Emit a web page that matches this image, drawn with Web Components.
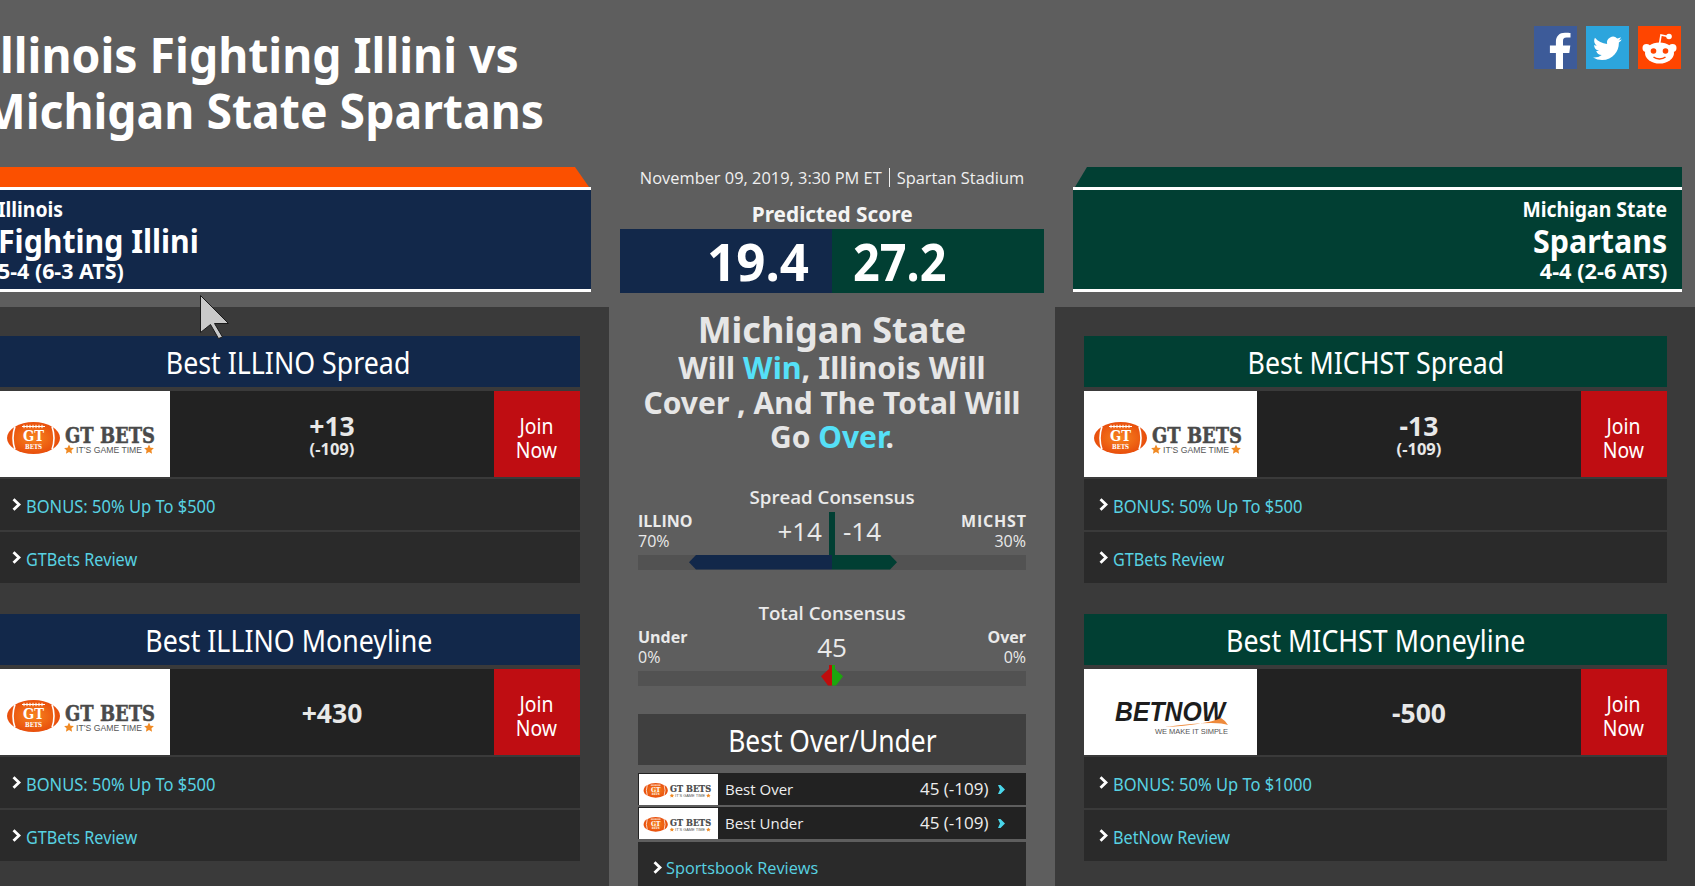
<!DOCTYPE html>
<html lang="en"><head><meta charset="utf-8"><title>Illinois vs Michigan State</title>
<style>
html,body{margin:0;padding:0;height:886px;overflow:hidden;background:#5e5e5e}
body{font-family:"Noto Sans","Open Sans",sans-serif;color:#fff}
</style></head><body>
<x-page>
  <x-title slot="title">Illinois Fighting Illini vs<br>Michigan State Spartans</x-title>
  <x-social slot="social"></x-social>

  <x-team slot="lteam" side="left" accent="#fb5000" bg="#12284a"><span>Illinois</span><span slot="name">Fighting Illini</span><span slot="rec">5-4 (6-3 ATS)</span></x-team>
  <x-team slot="rteam" side="right" accent="#013f33" bg="#013f33"><span>Michigan State</span><span slot="name">Spartans</span><span slot="rec">4-4 (2-6 ATS)</span></x-team>

  <x-panel slot="lpanel">
    <x-card color="#12284a"><span slot="title">Best ILLINO Spread</span><x-gt slot="logo"></x-gt><span slot="odds">+13</span><span slot="juice">(-109)</span><span slot="bonus">BONUS: 50% Up To $500</span><span slot="review">GTBets Review</span></x-card>
    <x-card color="#12284a"><span slot="title">Best ILLINO Moneyline</span><x-gt slot="logo"></x-gt><span slot="odds">+430</span><span slot="bonus">BONUS: 50% Up To $500</span><span slot="review">GTBets Review</span></x-card>
  </x-panel>

  <x-center slot="center">
    <x-score></x-score>
    <x-verdict></x-verdict>
    <x-consensus kind="spread"></x-consensus>
    <x-consensus kind="total"></x-consensus>
    <x-ou></x-ou>
  </x-center>

  <x-panel slot="rpanel" class="r">
    <x-card color="#013f33"><span slot="title">Best MICHST Spread</span><x-gt slot="logo"></x-gt><span slot="odds">-13</span><span slot="juice">(-109)</span><span slot="bonus">BONUS: 50% Up To $500</span><span slot="review">GTBets Review</span></x-card>
    <x-card color="#013f33"><span slot="title">Best MICHST Moneyline</span><x-betnow slot="logo"></x-betnow><span slot="odds">-500</span><span slot="bonus">BONUS: 50% Up To $1000</span><span slot="review">BetNow Review</span></x-card>
  </x-panel>
</x-page>
<x-cursor></x-cursor>

<script>
const CHEV='<svg width="9" height="13" viewBox="0 0 9 13"><path d="M1.5 1.2 L7 6.5 L1.5 11.8" fill="none" stroke="#fff" stroke-width="2.8"/></svg>';
function def(name,render){
  customElements.define(name,class extends HTMLElement{
    connectedCallback(){ if(this.shadowRoot) return; this.attachShadow({mode:'open'}).innerHTML=render(this); }
  });
}
def('x-page',()=>`<style>
:host{display:grid;grid-template-columns:641px 446px 641px;grid-template-rows:167px 140px 1fr;width:1728px;height:886px;margin-left:-32px;overflow:hidden}
.top{grid-column:1/4;grid-row:1;display:flex;justify-content:space-between;align-items:flex-start;padding:0 15px 0 14px}
.lt{grid-column:1;grid-row:2;padding:0 18px 15px 14px}
.rt{grid-column:3;grid-row:2;padding:0 14px 15px 18px}
.lp{grid-column:1;grid-row:3}.rp{grid-column:3;grid-row:3}
.c{grid-column:2;grid-row:2/4}
</style>
<div class="top"><slot name="title"></slot><slot name="social"></slot></div>
<div class="lt"><slot name="lteam"></slot></div>
<div class="c"><slot name="center"></slot></div>
<div class="rt"><slot name="rteam"></slot></div>
<div class="lp"><slot name="lpanel"></slot></div>
<div class="rp"><slot name="rpanel"></slot></div>`);
def('x-title',()=>`<style>
:host{display:block;padding-top:26px;font:700 49px/56px "Noto Sans",sans-serif;color:#fff;white-space:nowrap}
.t{display:inline-block;transform:scaleX(.945);transform-origin:0 0}
</style><div class="t"><slot></slot></div>`);
def('x-social',()=>`<style>
:host{display:flex;gap:9px;padding-top:26px}
svg{display:block;width:43px;height:43px}
</style>
<svg viewBox="0 0 43 43"><rect width="43" height="43" fill="#3d5b99"/><path d="M29 43V27h6.3l1-7.6H29v-4.2c0-2.2.7-3.6 3.6-3.6h3.9V7c-1-.1-3-.3-5.6-.3-5.500 0-9 3.300-9 9.100v3.600h-6V27h6v16z" fill="#fff"/></svg>
<svg viewBox="0 0 43 43"><rect width="43" height="43" fill="#2ca5dd"/><g transform="translate(7 8) scale(1.2)"><path fill="#fff" d="M23.953 4.57a10 10 0 01-2.825.775 4.958 4.958 0 002.163-2.723c-.951.555-2.005.959-3.127 1.184a4.92 4.92 0 00-8.384 4.482C7.69 8.095 4.067 6.13 1.64 3.162a4.822 4.822 0 00-.666 2.475c0 1.71.87 3.213 2.188 4.096a4.904 4.904 0 01-2.228-.616v.06a4.923 4.923 0 003.946 4.827 4.996 4.996 0 01-2.212.085 4.936 4.936 0 004.604 3.417 9.867 9.867 0 01-6.102 2.105c-.39 0-.779-.023-1.17-.067a13.995 13.995 0 007.557 2.209c9.053 0 13.998-7.496 13.998-13.985 0-.21 0-.42-.015-.63A9.935 9.935 0 0024 4.59z"/></g></svg>
<svg viewBox="0 0 43 43"><rect width="43" height="43" fill="#ff4500"/>
<path d="M21.500 18 L23 9 L30 10.500" fill="none" stroke="#fff" stroke-width="1.600"/><circle cx="31" cy="10.500" r="2.800" fill="#fff"/>
<circle cx="8.500" cy="22" r="4" fill="#fff"/><circle cx="34.500" cy="22" r="4" fill="#fff"/>
<ellipse cx="21.500" cy="27" rx="14.500" ry="10.500" fill="#fff"/>
<circle cx="15.500" cy="25" r="2.800" fill="#ff4500"/><circle cx="27.500" cy="25" r="2.800" fill="#ff4500"/>
<path d="M15.500 31c3 2.500 9 2.500 12 0" fill="none" stroke="#ff4500" stroke-width="1.500"/></svg>`);
def('x-team',h=>{const r=h.getAttribute('side')==='right';return `<style>
:host{display:block;height:125px;color:#fff}
.cap{height:20px;background:${h.getAttribute('accent')};clip-path:${r?'polygon(14px 0,100% 0,100% 100%,2px 100%)':'polygon(0 0,calc(100% - 16px) 0,calc(100% - 2px) 100%,0 100%)'}}
.box{box-sizing:border-box;border-top:3px solid #fff;border-bottom:3px solid #fff;height:105px;background:${h.getAttribute('bg')};
 padding:0 15px 0 16px;text-align:${r?'right':'left'};display:flex;flex-direction:column}
.a{font:700 20.500px/24px "Noto Sans",sans-serif;padding-top:7px}
.b{font:700 32px/39px "Noto Sans",sans-serif;}
.c{font:700 21.500px/22px "Noto Sans",sans-serif;}
.s{display:inline-block;transform:scaleX(.945);transform-origin:${r?'100% 0':'0 0'}}
.b .s{transform:scaleX(${r?.95:.945})}.c .s{transform:scaleX(${r?1.01:.995})}
</style><div class="cap"></div><div class="box">
<div class="a"><span class="s"><slot></slot></span></div><div class="b"><span class="s"><slot name="name"></slot></span></div><div class="c"><span class="s"><slot name="rec"></slot></span></div></div>`});
def('x-panel',()=>`<style>
:host{display:flex;flex-direction:column;gap:31px;height:100%;box-sizing:border-box;background:#3a3a3a;padding:29px 29px 0 29px}
</style><slot></slot>`);
def('x-card',h=>`<style>
:host{display:block;width:583px;color:#fff}
.h{height:51px;background:${h.getAttribute('color')};display:flex;justify-content:center;margin-bottom:4px}
.h span{display:inline-block;font:400 30px/53px "Noto Sans",sans-serif;transform:scaleX(.892);white-space:nowrap}
.row{display:flex;height:86px;background:#222;margin-bottom:2px}
.logo{width:173px;background:#fff;flex:none}
.odds{flex:1;display:flex;flex-direction:column;align-items:center;justify-content:center;color:#e8e8e8;font-family:"Noto Sans",sans-serif;font-weight:700;padding-top:3px}
.o{font-size:26.500px;line-height:26px}.j{font-size:16.500px;line-height:18px;padding-top:1px}
.j:empty{padding:0}
.join{width:86px;flex:none;background:#bf0d12;display:flex;align-items:center;justify-content:center;text-align:center;padding:5px 2px 0 0;box-sizing:border-box}
.join span{display:inline-block;font:400 22px/24px "Noto Sans",sans-serif;transform:scaleX(.88)}
.l{display:flex;align-items:center;height:51px;background:#2a2a2a;padding:2px 0 0 15px;box-sizing:border-box;margin-bottom:2px;color:#58d2e2}
.l svg{flex:none;margin:-3px 5px 0 0}
.l b{font:400 18px/1 "Noto Sans",sans-serif;display:inline-block;transform:scaleX(.917);transform-origin:0 50%;white-space:nowrap}
.l:last-child{margin:0}
.l:last-child b{transform:scaleX(.9)}
</style>
<div class="h"><span><slot name="title"></slot></span></div>
<div class="row"><div class="logo"><slot name="logo"></slot></div>
<div class="odds"><div class="o"><slot name="odds"></slot></div><div class="j"><slot name="juice"></slot></div></div>
<div class="join"><span>Join<br>Now</span></div></div>
<div class="l">${CHEV}<b><slot name="bonus"></slot></b></div>
<div class="l">${CHEV}<b><slot name="review"></slot></b></div>`);
const GT=(w,h,vb)=>`<svg width="${w}" height="${h}" viewBox="${vb}" style="display:block" font-family="'DejaVu Serif','Liberation Serif',serif">
<defs><radialGradient id="fb"><stop offset="0" stop-color="#f7841f"/><stop offset="1" stop-color="#e84e0c"/></radialGradient></defs>
<ellipse cx="36.500" cy="47" rx="26.500" ry="16" fill="url(#fb)"/>
<path d="M18 35.500q-4 11.500 0 23M55 35.500q4 11.500 0 23" fill="none" stroke="#fff" stroke-width="1.600"/>
<path d="M25 35.500h23M27 33.800v3.400M30 33.800v3.400M33 33.800v3.400M36 33.800v3.400M39 33.800v3.400M42 33.800v3.400M45 33.800v3.400" stroke="#fff" stroke-width="1" fill="none"/>
<text x="36.500" y="50" text-anchor="middle" font-size="15" font-weight="700" fill="#fff" textLength="21" lengthAdjust="spacingAndGlyphs">GT</text>
<text x="36.500" y="58" text-anchor="middle" font-size="7" font-weight="700" fill="#fff" textLength="17" lengthAdjust="spacingAndGlyphs">BETS</text>
<text x="68" y="51.500" font-size="22" font-weight="700" fill="#4a4a4a" stroke="#4a4a4a" stroke-width=".5" textLength="90" lengthAdjust="spacingAndGlyphs">GT BETS</text>
<text x="79" y="61.500" font-size="8.500" font-family="'Liberation Sans',sans-serif" fill="#555" textLength="66" lengthAdjust="spacingAndGlyphs">IT’S GAME TIME</text>
<path d="M72 53.500l1.500 3.200 3.400.4-2.500 2.300.7 3.400-3.100-1.700-3.100 1.700.7-3.400-2.500-2.300 3.400-.4zM152 53.500l1.500 3.200 3.400.4-2.500 2.300.7 3.400-3.100-1.700-3.100 1.700.7-3.400-2.500-2.300 3.400-.4z" fill="#f08a24"/>
</svg>`;
def('x-gt',h=>`<style>:host{display:block}</style>`+(h.hasAttribute('small')?GT(79,31,'0 11 173 68'):GT(173,86,'0 0 173 86')));
def('x-betnow',()=>`<style>:host{display:block}</style><svg width="173" height="86" viewBox="0 0 173 86" style="display:block">
<text x="31" y="52" font-family="'Liberation Sans',sans-serif" font-size="27" font-weight="700" font-style="italic" fill="#1d1d1d" textLength="110" lengthAdjust="spacingAndGlyphs">BETNOW</text>
<path d="M81 58q40-2 56-9q5 3 7 7q-12-5-63 2z" fill="#ee8a3c"/>
<text x="71" y="65" font-family="'Liberation Sans',sans-serif" font-size="7.500" fill="#555" textLength="73" lengthAdjust="spacing">WE MAKE IT SIMPLE</text></svg>`);
def('x-center',()=>`<style>:host{display:block;height:100%}</style><slot></slot>`);
def('x-score',()=>`<style>
:host{display:block;padding:0 11px;font-family:"Open Sans","Noto Sans",sans-serif;text-align:center}
.d{font-size:16.400px;color:#f0f0f0;display:flex;justify-content:center;height:21px;align-items:center;white-space:nowrap}
.d i{display:block;width:1px;height:19px;background:#f0f0f0;margin:0 7px}
.p{font:700 21px/26px "Noto Sans",sans-serif;height:41px;padding-top:13px;box-sizing:border-box;color:#f4f4f4}
.p span{display:inline-block;transform:scaleX(.99)}
.s{display:grid;grid-template-columns:1fr 1fr;height:63px;font:700 52px/64px "Noto Sans",sans-serif;color:#fff}
.s div:first-child{background:#12284a;text-align:right;padding-right:23px}
.s div:last-child{background:#013f33;text-align:left;padding-left:21px}
.s span{display:inline-block;transform:scaleX(.98);transform-origin:100% 0}
.s div:last-child span{transform:scaleX(.9);transform-origin:0 0}
</style><div class="d"><span>November 09, 2019, 3:30 PM ET</span><i></i><span>Spartan Stadium</span></div>
<div class="p"><span>Predicted Score</span></div>
<div class="s"><div><span>19.4</span></div><div><span>27.2</span></div></div>`);
def('x-verdict',()=>`<style>
:host{display:block;text-align:center;color:#e6e6e6;padding-top:17px;font-weight:700;font-family:"Noto Sans",sans-serif;height:176px;box-sizing:content-box}
.a{font-size:36px;line-height:42px}.b{font-size:30px;line-height:34.500px}
em{font-style:normal;color:#55e0f8}
.s{display:inline-block;white-space:nowrap}
.w{transform:scaleX(1.018)}
</style><div class="a"><span class="s">Michigan State</span></div>
<div class="b"><span class="s w">Will <em>Win</em>, Illinois Will</span></div>
<div class="b"><span class="s">Cover , And The Total Will</span></div>
<div class="b"><span class="s">Go <em>Over</em>.</span></div>`);
def('x-consensus',h=>{const sp=h.getAttribute('kind')==='spread';return `<style>
:host{display:block;margin:0 29px;font-family:"Open Sans","Noto Sans",sans-serif;color:#eaeaea;height:${sp?116:113}px;position:relative}
.h{text-align:center;font-size:18.700px;line-height:24px;font-weight:600}
.g{display:grid;grid-template-columns:1fr auto 1fr;height:44px;padding-top:2px}
.sd{font-size:16px;line-height:20px}
.sd b{display:block;font-size:16px;font-weight:700}
.sd b.w{letter-spacing:.8px;margin-right:-.8px}
.sd:last-child{text-align:right}
.m{font-size:26px;line-height:34px;display:flex;justify-content:center;padding-top:3px;width:130px;box-sizing:border-box}
.m span{display:block;width:65px;box-sizing:border-box}
.m .c{text-align:center;width:130px}
.m .l{text-align:right;padding-right:10px}.m .r{padding-left:11px}
.t{position:relative;height:14.500px;background:#525252}
.pin{position:absolute;left:191px;top:-43px;width:6px;height:43px;background:#013f33}
.n{position:absolute;left:51px;width:143px;top:0;bottom:0;background:#12284a;clip-path:polygon(7px 0,100% 0,100% 100%,7px 100%,0 50%)}
.v{position:absolute;left:194px;width:65px;top:0;bottom:0;background:#013f33;clip-path:polygon(0 0,calc(100% - 7px) 0,100% 50%,calc(100% - 7px) 100%,0 100%)}
.dl,.dr{position:absolute;top:-6px;bottom:0;width:11px}
.dl{left:183px;background:#bf0c0c;clip-path:polygon(8px 0,100% 0,100% 100%,7px 100%,0 55%,8px 20%)}
.dr{left:194px;background:#1da60e;clip-path:polygon(0 0,3px 0,3px 20%,100% 55%,4px 100%,0 100%)}
</style>
<div class="h">${sp?'Spread Consensus':'Total Consensus'}</div>
<div class="g"><div class="sd"><b>${sp?'ILLINO':'Under'}</b>${sp?'70%':'0%'}</div>
${sp?'<div class="m"><span class="l">+14</span><span class="r">-14</span></div>':'<div class="m"><span class="c">45</span></div>'}
<div class="sd"><b class="${sp?'w':''}">${sp?'MICHST':'Over'}</b>${sp?'30%':'0%'}</div></div>
<div class="t">${sp?'<i class="n"></i><i class="v"></i><i class="pin"></i>':'<i class="dl"></i><i class="dr"></i>'}</div>`});
def('x-ou',()=>`<style>
:host{display:block;margin:0 29px;color:#fff}
.h{height:51px;background:#3f3f3f;text-align:center;margin-bottom:8px}
.h span{display:inline-block;font:400 30px/54px "Noto Sans",sans-serif;transform:scaleX(.88)}
.r{display:flex;height:32px;align-items:center;background:#222;margin-bottom:2px;font:400 15px/34px "Open Sans",sans-serif;color:#eee}
.lg{width:79px;height:31px;margin-left:1px;background:#fff;flex:none}
.n{flex:1;padding-left:7px}.v{width:68px;white-space:nowrap;font-size:17px}
.a{margin:0 21px 0 10px;width:7px;height:9px;display:block}
.rv{margin-top:3px;height:70px;background:#2a2a2a;display:flex;align-items:flex-start;padding:14px 0 0 15px;box-sizing:border-box;color:#58d2e2;font:400 16.300px/24px "Open Sans",sans-serif}
.rv svg{margin:5px 4px 0 0}
</style>
<div class="h"><span>Best Over/Under</span></div>
<div class="r"><div class="lg"><x-gt small></x-gt></div><span class="n">Best Over</span><span class="v">45 (-109)</span><svg class="a" viewBox="0 0 7 9"><path d="M0 0H2.500L7 4.500 2.500 9H0L2 4.500z" fill="#4ad6ea"/></svg></div>
<div class="r"><div class="lg"><x-gt small></x-gt></div><span class="n">Best Under</span><span class="v">45 (-109)</span><svg class="a" viewBox="0 0 7 9"><path d="M0 0H2.500L7 4.500 2.500 9H0L2 4.500z" fill="#4ad6ea"/></svg></div>
<div class="rv">${CHEV}<span>Sportsbook Reviews</span></div>`);
def('x-cursor',()=>`<style>:host{position:absolute;left:200px;top:295px;width:30px;height:45px;display:block}</style>
<svg width="30" height="45" viewBox="0 0 30 45"><path d="M.5.500L28.500 28.500H14.500L22.500 42L18.500 43.500L10.500 29.500L.5 37.500Z" fill="#c9c9c9" stroke="#1a1a1a" stroke-width="1"/></svg>`);
</script>
</body></html>
